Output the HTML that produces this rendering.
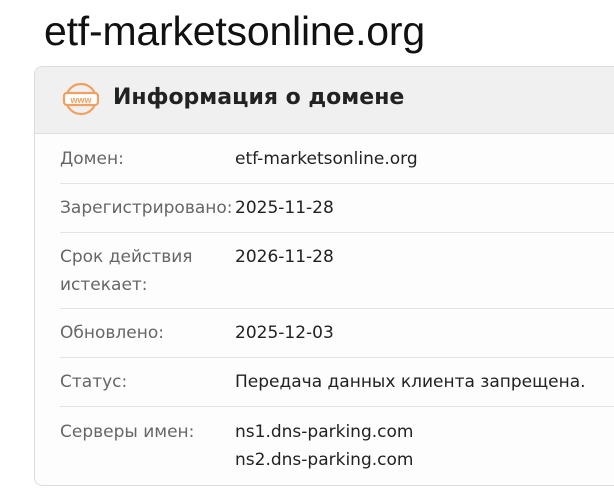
<!DOCTYPE html>
<html><head><meta charset="utf-8"><style>
body{margin:0;width:614px;height:500px;background:#fff;font-family:"DejaVu Sans","Liberation Sans",sans-serif;overflow:hidden;position:relative}
h1{position:absolute;left:44px;top:8px;margin:0;font-size:41px;font-weight:normal;font-family:"Liberation Sans",sans-serif;color:#111;letter-spacing:-0.2px}
.card{position:absolute;left:34px;top:66px;width:600px;height:418px;border:1px solid #ddd;border-radius:8px;background:#fdfdfd;overflow:hidden}
.hd{height:66px;background:#f0f0f0;border-bottom:1px solid #ddd;position:relative}
.hd span{position:absolute;left:78px;top:18px;font-size:22px;font-weight:bold;color:#222}
.hd svg{position:absolute;left:27px;top:15px}
.row{position:absolute;left:25px;width:580px;border-bottom:1px solid #e3e3e3;font-size:17px;line-height:28px}
.row .k{position:absolute;left:0;color:#666}
.row .v{position:absolute;left:175px;color:#222}
</style></head><body>
<h1>etf-marketsonline.org</h1>
<div class="card">
<div class="hd"><svg width="38" height="34" viewBox="0 0 38 34"><circle cx="19" cy="17" r="15" fill="none" stroke="#f0a060" stroke-width="2.2"/><rect x="2" y="11" width="34" height="12" rx="3" fill="#fff" stroke="#f0a060" stroke-width="2.2"/><text x="19" y="21" font-size="9" font-weight="bold" text-anchor="middle" fill="#f0a060" font-family="Liberation Sans">www</text></svg><span>Информация о домене</span></div>
<div class="row" style="top:78px;height:38px"><div class="k">Домен:</div><div class="v">etf-marketsonline.org</div></div>
<div class="row" style="top:127px;height:38px"><div class="k">Зарегистрировано:</div><div class="v">2025-11-28</div></div>
<div class="row" style="top:176px;height:65px"><div class="k">Срок действия<br>истекает:</div><div class="v">2026-11-28</div></div>
<div class="row" style="top:252px;height:38px"><div class="k">Обновлено:</div><div class="v">2025-12-03</div></div>
<div class="row" style="top:301px;height:38px"><div class="k">Статус:</div><div class="v">Передача данных клиента запрещена.</div></div>
<div class="row" style="top:351px;height:60px;border:none"><div class="k">Серверы имен:</div><div class="v">ns1.dns-parking.com<br>ns2.dns-parking.com</div></div>
</div>
</body></html>
